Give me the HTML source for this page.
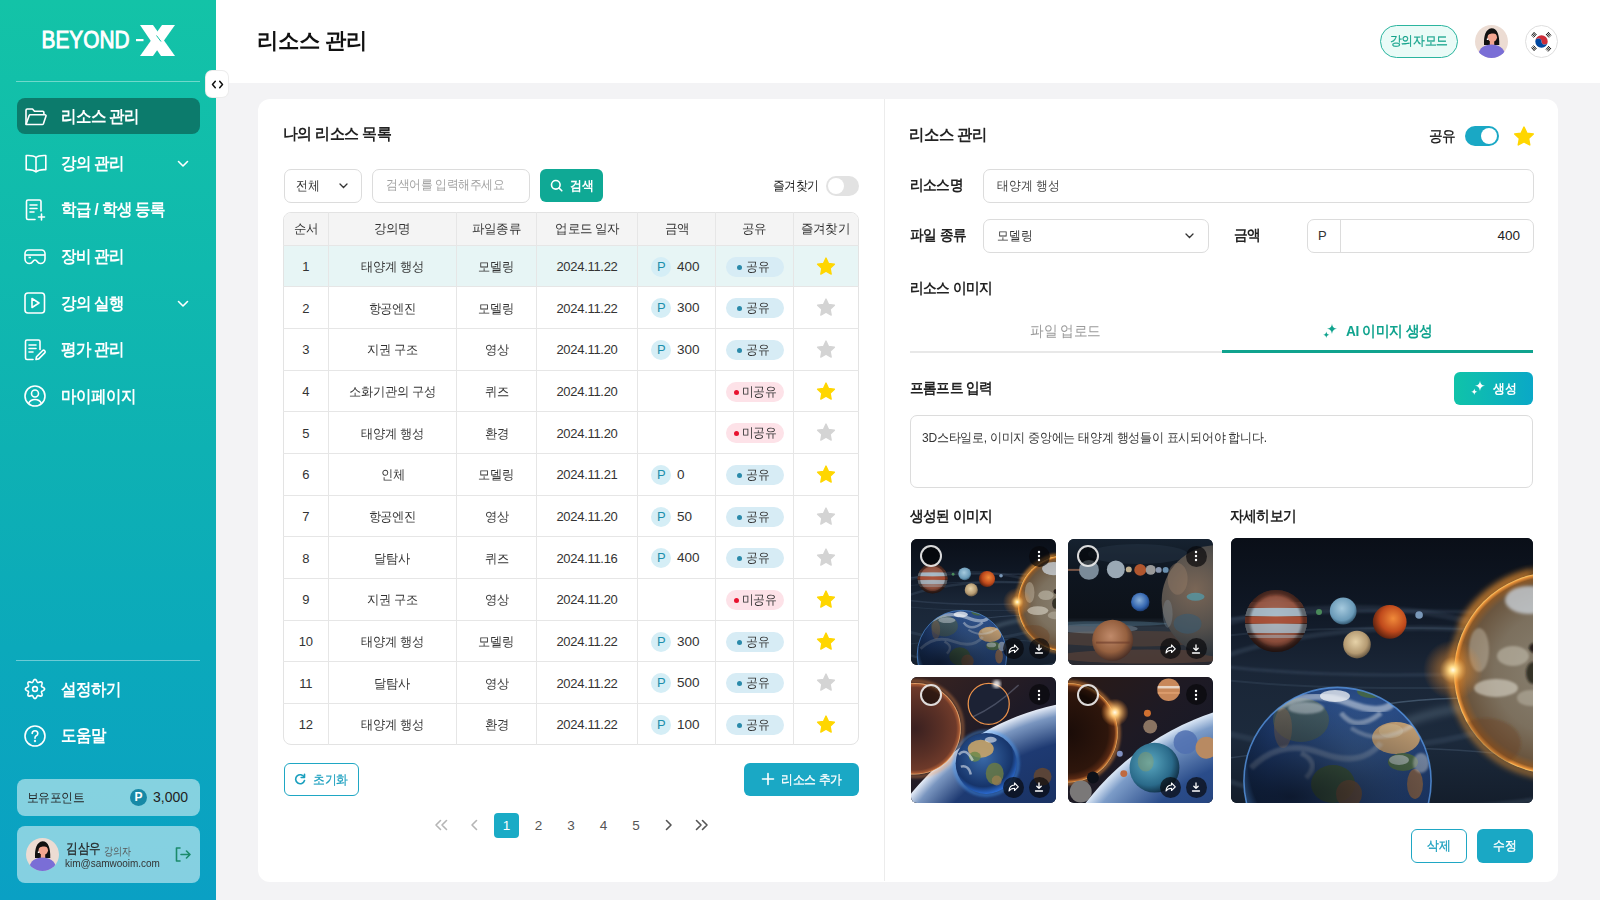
<!DOCTYPE html>
<html lang="ko">
<head>
<meta charset="utf-8">
<style>
*{box-sizing:border-box;margin:0;padding:0}
html,body{width:1600px;height:900px;overflow:hidden}
body{font-family:"Liberation Sans",sans-serif;background:#f3f3f5;position:relative;color:#222}
.abs{position:absolute}
.k{display:inline-block;transform:scaleX(var(--s,.91));transform-origin:0 50%}
.kc{transform-origin:50% 50%}
#side{position:absolute;left:0;top:0;width:216px;height:900px;background:linear-gradient(180deg,#13c3a7 0%,#10b9ae 30%,#0eb1b3 50%,#0ba9bb 72%,#0aa0c4 100%)}
.sdiv{position:absolute;left:16px;width:184px;height:1px;background:rgba(255,255,255,0.4)}
.mtx{position:absolute;left:61px;height:36px;line-height:35px;color:#fff;font-size:16.5px;font-weight:bold;letter-spacing:-0.6px;white-space:nowrap}
#hdr{position:absolute;left:216px;top:0;width:1384px;height:83px;background:#fff}
.ttl{position:absolute;left:257px;top:27px;font-size:22px;font-weight:bold;color:#111;line-height:28px;letter-spacing:-0.5px}
#card{position:absolute;left:258px;top:99px;width:1300px;height:782.5px;background:#fff;border-radius:12px}
.vdiv{position:absolute;left:884px;top:99px;width:1px;height:782px;background:#ececec}
.h3{position:absolute;font-size:16px;font-weight:bold;color:#222;line-height:20px;letter-spacing:-0.5px;white-space:nowrap}
.lbl{position:absolute;font-size:14.5px;font-weight:bold;color:#222;line-height:20px;letter-spacing:-0.5px;white-space:nowrap}
.inp{position:absolute;border:1px solid #dcdcdc;border-radius:7px;background:#fff;font-size:13px;color:#333;white-space:nowrap}
.tbl{position:absolute;border:1px solid #e3e3e3;border-radius:8px}
.hl{position:absolute;height:1px;background:#e6e6e6}
.vl{position:absolute;width:1px;background:#e6e6e6}
.cell{position:absolute;text-align:center;font-size:13px;color:#333;white-space:nowrap;letter-spacing:-0.3px}
.th{color:#333}
.pbadge{position:absolute;width:20px;height:20px;border-radius:10px;background:#d5eef6;color:#1c8fab;font-size:13px;text-align:center;line-height:20px}
.amt{position:absolute;font-size:13.5px;color:#333;line-height:20px}
.pill{position:absolute;width:58.5px;height:20px;border-radius:10px;font-size:12.5px;color:#333;line-height:20px;text-align:center;padding-left:6px;letter-spacing:-0.3px;white-space:nowrap}
.pill i{position:absolute;left:11px;top:8px;width:5px;height:5px;border-radius:3px}
.pill.sh{background:#d7ecf5}
.pill.sh i{background:#2b8aaa}
.pill.ns{background:#fde2e8;padding-left:9px}
.pill.ns i{background:#e8122f;left:8px}
.pg{position:absolute;top:813px;width:25px;height:25px;line-height:25px;text-align:center;font-size:13.5px;color:#555}
.thumb{position:absolute;border-radius:6px;overflow:hidden;background:#0e1522}
.ck{position:absolute;width:22px;height:22px;border-radius:11px;border:2px solid rgba(255,255,255,0.85);background:rgba(0,0,0,0.55)}
.dk{position:absolute;width:21px;height:21px;border-radius:11px;background:rgba(8,8,10,0.68)}
</style>
</head>
<body>
<div id="hdr"></div>
<div id="side">
<svg class="abs" style="left:40px;top:24px" width="140" height="34" viewBox="0 0 140 34">
<text x="1.5" y="24" font-family="Liberation Sans" font-size="23" fill="#fff" stroke="#fff" stroke-width=".9" textLength="88" lengthAdjust="spacingAndGlyphs">BEYOND</text>
<rect x="96" y="15" width="7.5" height="2.2" fill="#fff"/>
<polygon points="100,1 113,1 135,32 121,32" fill="#fff"/>
<polygon points="122,1 135,1 113,32 100,32" fill="#fff"/>
<path d="M116.5 11.5 L121 17.5" stroke="#13c3a7" stroke-width="1"/>
</svg>
<div class="sdiv" style="top:81px"></div>
<div class="abs" style="left:17px;top:98px;width:183px;height:36px;border-radius:8px;background:#0c7b6c"></div>
<div class="abs" style="left:25px;top:108px"><svg width="22" height="18" viewBox="0 0 22 18" fill="none" stroke="#fff" stroke-width="1.6" stroke-linejoin="round"><path d="M1 16.5V2.2C1 1.5 1.5 1 2.2 1h5.3l2 2.2h8.2c.7 0 1.2.5 1.2 1.2v2.4"/><path d="M1 16.5l3.2-9c.2-.5.6-.8 1.1-.8h14.6c.8 0 1.3.7 1.1 1.4l-2.6 7.6c-.2.5-.6.8-1.1.8H1z"/></svg></div>
<div class="mtx" style="top:99px"><span class="k">리소스 관리</span></div>
<div class="abs" style="left:25px;top:154px"><svg width="22" height="20" viewBox="0 0 22 20" fill="none" stroke="#fff" stroke-width="1.6" stroke-linejoin="round"><path d="M11 3.5C9 1.8 6 1.2 1.2 1.5v14.2c4.6-.3 7.6.3 9.8 2.3 2.2-2 5.2-2.6 9.8-2.3V1.5C16 1.2 13 1.8 11 3.5z"/><path d="M11 3.5V18"/></svg></div>
<div class="mtx" style="top:146px"><span class="k">강의 관리</span></div>
<div class="abs" style="left:177px;top:160px;line-height:0"><svg width="12" height="8" viewBox="0 0 12 8" fill="none" stroke="#fff" stroke-width="1.6" stroke-linecap="round" stroke-linejoin="round"><path d="M1.5 1.5L6 6l4.5-4.5"/></svg></div>
<div class="abs" style="left:25px;top:199px"><svg width="22" height="22" viewBox="0 0 22 22" fill="none" stroke="#fff" stroke-width="1.6" stroke-linecap="round" stroke-linejoin="round"><path d="M10 20.5H3c-.8 0-1.5-.7-1.5-1.5V2.5C1.5 1.7 2.2 1 3 1h11.5c.8 0 1.5.7 1.5 1.5V12"/><path d="M5 6h7M5 9.5h7M5 13h4"/><path d="M16.5 15v6M13.5 18h6"/></svg></div>
<div class="mtx" style="top:192px"><span class="k">학급 / 학생 등록</span></div>
<div class="abs" style="left:24px;top:249px"><svg width="22" height="16" viewBox="0 0 22 16" fill="none" stroke="#fff" stroke-width="1.6" stroke-linejoin="round"><path d="M4.5 1h13c2 0 3.5 1.6 3.5 3.5v5.5c0 2.5-2 4.5-4.5 4.5-1.6 0-2.6-.8-3.3-2-.6-1-1.4-1.5-2.2-1.5s-1.6.5-2.2 1.5c-.7 1.2-1.7 2-3.3 2C3 14.5 1 12.5 1 10V4.5C1 2.6 2.5 1 4.5 1z"/><path d="M1.2 6h19.6"/><path d="M4.5 8.5h2.5"/></svg></div>
<div class="mtx" style="top:239px"><span class="k">장비 관리</span></div>
<div class="abs" style="left:24px;top:292px"><svg width="22" height="22" viewBox="0 0 22 22" fill="none" stroke="#fff" stroke-width="1.6" stroke-linejoin="round"><rect x="1" y="1" width="19.5" height="20" rx="3"/><path d="M8 6.5v9l7-4.5z"/></svg></div>
<div class="mtx" style="top:286px"><span class="k">강의 실행</span></div>
<div class="abs" style="left:177px;top:300px;line-height:0"><svg width="12" height="8" viewBox="0 0 12 8" fill="none" stroke="#fff" stroke-width="1.6" stroke-linecap="round" stroke-linejoin="round"><path d="M1.5 1.5L6 6l4.5-4.5"/></svg></div>
<div class="abs" style="left:24px;top:339px"><svg width="22" height="22" viewBox="0 0 22 22" fill="none" stroke="#fff" stroke-width="1.6" stroke-linecap="round" stroke-linejoin="round"><path d="M9 20.5H3c-.8 0-1.5-.7-1.5-1.5V2.5C1.5 1.7 2.2 1 3 1h11.5c.8 0 1.5.7 1.5 1.5v8"/><path d="M5 6h7M5 9.5h7M5 13h4"/><path d="M12 20.5l.5-2.8 6-6c.6-.6 1.6-.6 2.2 0s.6 1.6 0 2.2l-6 6z"/></svg></div>
<div class="mtx" style="top:332px"><span class="k">평가 관리</span></div>
<div class="abs" style="left:24px;top:385px"><svg width="22" height="22" viewBox="0 0 22 22" fill="none" stroke="#fff" stroke-width="1.6"><circle cx="11" cy="11" r="10"/><circle cx="11" cy="8.5" r="3.5"/><path d="M4.5 18.5c1.2-2.6 3.6-4 6.5-4s5.3 1.4 6.5 4"/></svg></div>
<div class="mtx" style="top:379px"><span class="k">마이페이지</span></div>
<div class="abs" style="left:24px;top:678px"><svg width="22" height="22" viewBox="0 0 22 22" fill="none" stroke="#fff" stroke-width="1.6" stroke-linejoin="round"><path d="M11.00 1.40 L11.62 1.59 L12.17 2.13 L12.62 2.86 L12.98 3.61 L13.31 4.21 L13.68 4.53 L14.17 4.57 L14.82 4.37 L15.61 4.10 L16.45 3.90 L17.21 3.91 L17.79 4.21 L18.09 4.79 L18.10 5.55 L17.90 6.39 L17.63 7.17 L17.43 7.83 L17.47 8.32 L17.79 8.69 L18.39 9.02 L19.14 9.38 L19.87 9.83 L20.41 10.38 L20.60 11.00 L20.41 11.62 L19.87 12.17 L19.14 12.62 L18.39 12.98 L17.79 13.31 L17.47 13.68 L17.43 14.17 L17.63 14.82 L17.90 15.61 L18.10 16.45 L18.09 17.21 L17.79 17.79 L17.21 18.09 L16.45 18.10 L15.61 17.90 L14.82 17.63 L14.17 17.43 L13.68 17.47 L13.31 17.79 L12.98 18.39 L12.62 19.14 L12.17 19.87 L11.62 20.41 L11.00 20.60 L10.38 20.41 L9.83 19.87 L9.38 19.14 L9.02 18.39 L8.69 17.79 L8.32 17.47 L7.83 17.43 L7.18 17.63 L6.39 17.90 L5.55 18.10 L4.79 18.09 L4.21 17.79 L3.91 17.21 L3.90 16.45 L4.10 15.61 L4.37 14.83 L4.57 14.17 L4.53 13.68 L4.21 13.31 L3.61 12.98 L2.86 12.62 L2.13 12.17 L1.59 11.62 L1.40 11.00 L1.59 10.38 L2.13 9.83 L2.86 9.38 L3.61 9.02 L4.21 8.69 L4.53 8.32 L4.57 7.83 L4.37 7.17 L4.10 6.39 L3.90 5.55 L3.91 4.79 L4.21 4.21 L4.79 3.91 L5.55 3.90 L6.39 4.10 L7.17 4.37 L7.83 4.57 L8.32 4.53 L8.69 4.21 L9.02 3.61 L9.38 2.86 L9.83 2.13 L10.38 1.59 L11.00 1.40Z"/><circle cx="11" cy="11" r="2.4"/></svg></div>
<div class="mtx" style="top:672px"><span class="k">설정하기</span></div>
<div class="abs" style="left:24px;top:725px"><svg width="22" height="22" viewBox="0 0 22 22" fill="none" stroke="#fff" stroke-width="1.6" stroke-linecap="round"><circle cx="11" cy="11" r="10"/><path d="M8.2 8.5c0-1.7 1.3-2.8 2.8-2.8s2.8 1.1 2.8 2.7c0 1.2-.7 1.8-1.6 2.4-.8.5-1.2 1-1.2 2v.5"/><circle cx="11" cy="16" r=".4" fill="#fff"/></svg></div>
<div class="mtx" style="top:718px"><span class="k">도움말</span></div>
<div class="sdiv" style="top:660px"></div>
<div class="abs" style="left:17px;top:779px;width:183px;height:37px;border-radius:8px;background:rgba(255,255,255,0.5)"></div>
<div class="abs" style="left:27px;top:779px;line-height:37px;font-size:13px;color:#222;letter-spacing:-0.4px"><span class="k">보유포인트</span></div>
<div class="abs" style="left:130px;top:789px;width:17px;height:17px;border-radius:9px;background:#1789a6;color:#fff;font-size:12px;font-weight:bold;text-align:center;line-height:17px">P</div>
<div class="abs" style="left:153px;top:779px;line-height:37px;font-size:14px;color:#222">3,000</div>
<div class="abs" style="left:17px;top:826px;width:183px;height:56.5px;border-radius:8px;background:rgba(255,255,255,0.5)"></div>
<div class="abs" style="left:26px;top:838px"><svg width="33" height="33" viewBox="0 0 33 33"><defs><clipPath id="av1"><circle cx="16.5" cy="16.5" r="16.5"/></clipPath></defs><g clip-path="url(#av1)"><rect width="33" height="33" fill="#ecdcd3"/><path d="M9 20C8.6 11 10.5 4 16.5 3.2 22.5 3.4 24.4 10 24.3 20z" fill="#111"/><ellipse cx="17.3" cy="12.2" rx="4.7" ry="4.6" fill="#f2a590"/><path d="M11.5 10C12 5.5 14.5 4 17.5 4.2 20.5 4.5 22.3 7 22.2 9.2 19.5 8.2 15.5 8 11.5 10.5z" fill="#111"/><rect x="14.8" y="15.5" width="4.4" height="4.5" fill="#f2a590"/><circle cx="12.6" cy="14.2" r=".9" fill="#fff"/><path d="M3.3 29C4.8 22.5 9 19.6 16.5 19.4 24 19.6 28.3 22.5 30 28.5V34H3z" fill="#7a6ed6"/></g></svg></div>
<div class="abs" style="left:65.5px;top:839px;line-height:18px;font-size:14px;color:#222;-webkit-text-stroke:.25px #222"><span class="k" style="--s:0.83">김삼우</span></div><div class="abs" style="left:104px;top:842px;line-height:18px;font-size:10.5px;color:#555"><span class="k" style="--s:0.82">강의자</span></div>
<div class="abs" style="left:65px;top:856px;line-height:14px;font-size:10.5px;color:#333"><span class="k" style="--s:.95">kim@samwooim.com</span></div>
<svg class="abs" style="left:175px;top:847px" width="16" height="15" viewBox="0 0 16 15" fill="none" stroke="#1b8a6b" stroke-width="1.6" stroke-linecap="round" stroke-linejoin="round"><path d="M5 1H1.5v13H5"/><path d="M6 7.5h9M11.5 4l3.5 3.5-3.5 3.5"/></svg>
</div>
<div class="abs" style="left:205.5px;top:70.5px;width:22.7px;height:26.7px;background:#fff;border-radius:6px;box-shadow:0 0 0 1px #ececec"></div>
<svg class="abs" style="left:211px;top:79.5px" width="13" height="9" viewBox="0 0 13 9" fill="none" stroke="#111" stroke-width="1.5" stroke-linecap="round" stroke-linejoin="round"><path d="M4.3 1.2L1.5 4.5l2.8 3.3M8.7 1.2l2.8 3.3-2.8 3.3"/></svg>
<div class="ttl"><span class="k" style="--s:0.97">리소스 관리</span></div>
<div class="abs" style="left:1380px;top:25px;width:78px;height:33px;border-radius:17px;border:1px solid #2bb59f;background:#eafbf7;color:#16a38c;font-size:12.5px;-webkit-text-stroke:.25px #16a38c;text-align:center;line-height:31px;letter-spacing:-0.3px"><span class="k kc">강의자모드</span></div>
<div class="abs" style="left:1475px;top:25px"><svg width="33" height="33" viewBox="0 0 33 33"><defs><clipPath id="av2"><circle cx="16.5" cy="16.5" r="16.5"/></clipPath></defs><g clip-path="url(#av2)"><rect width="33" height="33" fill="#ecdcd3"/><path d="M9 20C8.6 11 10.5 4 16.5 3.2 22.5 3.4 24.4 10 24.3 20z" fill="#111"/><ellipse cx="17.3" cy="12.2" rx="4.7" ry="4.6" fill="#f2a590"/><path d="M11.5 10C12 5.5 14.5 4 17.5 4.2 20.5 4.5 22.3 7 22.2 9.2 19.5 8.2 15.5 8 11.5 10.5z" fill="#111"/><rect x="14.8" y="15.5" width="4.4" height="4.5" fill="#f2a590"/><circle cx="12.6" cy="14.2" r=".9" fill="#fff"/><path d="M3.3 29C4.8 22.5 9 19.6 16.5 19.4 24 19.6 28.3 22.5 30 28.5V34H3z" fill="#7a6ed6"/></g></svg></div>
<div class="abs" style="left:1525px;top:25px"><svg width="33" height="33" viewBox="0 0 33 33"><circle cx="16.5" cy="16.5" r="16" fill="#fff" stroke="#dedede"/><path d="M10.3 16.5a6.2 6.2 0 0 1 12.4 0a3.1 3.1 0 0 1-6.2 0a3.1 3.1 0 0 0-6.2 0z" fill="#cd2e3a"/><path d="M10.3 16.5a6.2 6.2 0 0 0 12.4 0a3.1 3.1 0 0 1-6.2 0a3.1 3.1 0 0 0-6.2 0z" fill="#0047a0"/><g stroke="#111" stroke-width="1"><path d="M6.5 10.5l3-3.5M7.5 11.5l3-3.5M8.5 12.5l3-3.5"/><path d="M22 8l3 3.5M23 7l3 3.5M21 9l3 3.5"/><path d="M6.5 22.5l3 3.5M7.5 21.5l3 3.5M8.5 20.5l3 3.5"/><path d="M22 25.5l3-3.5M23 26.5l3-3.5M21 24.5l3-3.5"/></g></svg></div>
<div id="card"></div>
<div class="vdiv"></div>

<!-- left panel -->
<div class="h3" style="left:283px;top:124px"><span class="k" style="--s:0.93">나의 리소스 목록</span></div>
<div class="inp" style="left:283.5px;top:169px;width:78px;height:33.5px;line-height:31px;padding-left:11px"><span class="k">전체</span></div>
<svg class="abs" style="left:339px;top:183px" width="9" height="6" viewBox="0 0 9 6" fill="none" stroke="#333" stroke-width="1.3" stroke-linecap="round"><path d="M1 1l3.5 3.5L8 1"/></svg>
<div class="inp" style="left:371.5px;top:169px;width:158px;height:33.5px;line-height:31px;padding-left:13px;color:#a3a3a3;font-size:12.5px;letter-spacing:-0.3px"><span class="k">검색어를 입력해주세요</span></div>
<div class="abs" style="left:540px;top:169px;width:63px;height:33px;border-radius:6px;background:#0fa995"></div>
<svg class="abs" style="left:550px;top:179px" width="13" height="13" viewBox="0 0 13 13" fill="none" stroke="#fff" stroke-width="1.6" stroke-linecap="round"><circle cx="5.8" cy="5.8" r="4.3"/><path d="M9 9l2.8 2.8"/></svg>
<div class="abs" style="left:570px;top:169px;line-height:33px;font-size:13px;color:#fff;font-weight:bold;letter-spacing:-0.3px"><span class="k">검색</span></div>
<div class="abs" style="left:773px;top:176px;line-height:20px;font-size:13px;color:#222;letter-spacing:-0.4px"><span class="k">즐겨찾기</span></div>
<div class="abs" style="left:826px;top:176px;width:33px;height:20px;border-radius:10px;background:#e2e2e2"></div>
<div class="abs" style="left:828px;top:178px;width:16px;height:16px;border-radius:8px;background:#fff"></div>
<div class="tbl" style="left:283px;top:212px;width:575.6px;height:533px"></div>
<div class="abs" style="left:284px;top:213px;width:573.6px;height:32.30000000000001px;background:#f4f4f4;border-radius:7px 7px 0 0"></div>
<div class="abs" style="left:284px;top:245.3px;width:573.6px;height:41.641666666666666px;background:#e7f5f5"></div>
<div class="hl" style="left:283px;top:244.80px;width:575.6px"></div>
<div class="hl" style="left:283px;top:286.44px;width:575.6px"></div>
<div class="hl" style="left:283px;top:328.08px;width:575.6px"></div>
<div class="hl" style="left:283px;top:369.73px;width:575.6px"></div>
<div class="hl" style="left:283px;top:411.37px;width:575.6px"></div>
<div class="hl" style="left:283px;top:453.01px;width:575.6px"></div>
<div class="hl" style="left:283px;top:494.65px;width:575.6px"></div>
<div class="hl" style="left:283px;top:536.29px;width:575.6px"></div>
<div class="hl" style="left:283px;top:577.93px;width:575.6px"></div>
<div class="hl" style="left:283px;top:619.58px;width:575.6px"></div>
<div class="hl" style="left:283px;top:661.22px;width:575.6px"></div>
<div class="hl" style="left:283px;top:702.86px;width:575.6px"></div>
<div class="vl" style="left:327.9px;top:212px;height:533px"></div>
<div class="vl" style="left:455.9px;top:212px;height:533px"></div>
<div class="vl" style="left:536.0px;top:212px;height:533px"></div>
<div class="vl" style="left:637.0px;top:212px;height:533px"></div>
<div class="vl" style="left:714.8px;top:212px;height:533px"></div>
<div class="vl" style="left:792.5px;top:212px;height:533px"></div>
<div class="cell th" style="left:283px;top:212px;width:45.39999999999998px;height:33.30000000000001px;line-height:33.30000000000001px"><span class="k kc" style="--s:0.96">순서</span></div>
<div class="cell th" style="left:328.4px;top:212px;width:128.0px;height:33.30000000000001px;line-height:33.30000000000001px"><span class="k kc" style="--s:0.96">강의명</span></div>
<div class="cell th" style="left:456.4px;top:212px;width:80.10000000000002px;height:33.30000000000001px;line-height:33.30000000000001px"><span class="k kc" style="--s:0.96">파일종류</span></div>
<div class="cell th" style="left:536.5px;top:212px;width:101.0px;height:33.30000000000001px;line-height:33.30000000000001px"><span class="k kc" style="--s:0.96">업로드 일자</span></div>
<div class="cell th" style="left:637.5px;top:212px;width:77.79999999999995px;height:33.30000000000001px;line-height:33.30000000000001px"><span class="k kc" style="--s:0.96">금액</span></div>
<div class="cell th" style="left:715.3px;top:212px;width:77.70000000000005px;height:33.30000000000001px;line-height:33.30000000000001px"><span class="k kc" style="--s:0.96">공유</span></div>
<div class="cell th" style="left:793px;top:212px;width:65.60000000000002px;height:33.30000000000001px;line-height:33.30000000000001px"><span class="k kc" style="--s:0.96">즐겨찾기</span></div>
<div class="cell" style="left:283px;top:246.10px;width:45.39999999999998px;height:41.64px;line-height:41.64px">1</div>
<div class="cell" style="left:328.4px;top:246.10px;width:128.0px;height:41.64px;line-height:41.64px"><span class="k kc" style="--s:0.94">태양계 행성</span></div>
<div class="cell" style="left:456.4px;top:246.10px;width:80.10000000000002px;height:41.64px;line-height:41.64px"><span class="k kc" style="--s:0.94">모델링</span></div>
<div class="cell" style="left:536.5px;top:246.10px;width:101.0px;height:41.64px;line-height:41.64px">2024.11.22</div>
<div class="pbadge" style="left:651.3px;top:256.82px">P</div>
<div class="amt" style="left:677px;top:256.82px">400</div>
<div class="pill sh" style="left:725.5px;top:256.82px"><i></i><span class="k kc">공유</span></div>
<div class="abs" style="left:816px;top:256.82px;width:20px;height:19px"><svg width="20" height="19" viewBox="0 0 24 23"><path d="M12 1.2l3.1 6.6 7.1.9-5.2 4.9 1.3 7.1L12 17.3l-6.3 3.4 1.3-7.1L1.8 8.7l7.1-.9z" fill="#ffd600" stroke="#ffd600" stroke-width="1.6" stroke-linejoin="round"/></svg></div>
<div class="cell" style="left:283px;top:287.74px;width:45.39999999999998px;height:41.64px;line-height:41.64px">2</div>
<div class="cell" style="left:328.4px;top:287.74px;width:128.0px;height:41.64px;line-height:41.64px"><span class="k kc" style="--s:0.94">항공엔진</span></div>
<div class="cell" style="left:456.4px;top:287.74px;width:80.10000000000002px;height:41.64px;line-height:41.64px"><span class="k kc" style="--s:0.94">모델링</span></div>
<div class="cell" style="left:536.5px;top:287.74px;width:101.0px;height:41.64px;line-height:41.64px">2024.11.22</div>
<div class="pbadge" style="left:651.3px;top:298.46px">P</div>
<div class="amt" style="left:677px;top:298.46px">300</div>
<div class="pill sh" style="left:725.5px;top:298.46px"><i></i><span class="k kc">공유</span></div>
<div class="abs" style="left:816px;top:298.46px;width:20px;height:19px"><svg width="20" height="19" viewBox="0 0 24 23"><path d="M12 1.2l3.1 6.6 7.1.9-5.2 4.9 1.3 7.1L12 17.3l-6.3 3.4 1.3-7.1L1.8 8.7l7.1-.9z" fill="#d4d4d4" stroke="#d4d4d4" stroke-width="1.6" stroke-linejoin="round"/></svg></div>
<div class="cell" style="left:283px;top:329.38px;width:45.39999999999998px;height:41.64px;line-height:41.64px">3</div>
<div class="cell" style="left:328.4px;top:329.38px;width:128.0px;height:41.64px;line-height:41.64px"><span class="k kc" style="--s:0.94">지권 구조</span></div>
<div class="cell" style="left:456.4px;top:329.38px;width:80.10000000000002px;height:41.64px;line-height:41.64px"><span class="k kc" style="--s:0.94">영상</span></div>
<div class="cell" style="left:536.5px;top:329.38px;width:101.0px;height:41.64px;line-height:41.64px">2024.11.20</div>
<div class="pbadge" style="left:651.3px;top:340.10px">P</div>
<div class="amt" style="left:677px;top:340.10px">300</div>
<div class="pill sh" style="left:725.5px;top:340.10px"><i></i><span class="k kc">공유</span></div>
<div class="abs" style="left:816px;top:340.10px;width:20px;height:19px"><svg width="20" height="19" viewBox="0 0 24 23"><path d="M12 1.2l3.1 6.6 7.1.9-5.2 4.9 1.3 7.1L12 17.3l-6.3 3.4 1.3-7.1L1.8 8.7l7.1-.9z" fill="#d4d4d4" stroke="#d4d4d4" stroke-width="1.6" stroke-linejoin="round"/></svg></div>
<div class="cell" style="left:283px;top:371.03px;width:45.39999999999998px;height:41.64px;line-height:41.64px">4</div>
<div class="cell" style="left:328.4px;top:371.03px;width:128.0px;height:41.64px;line-height:41.64px"><span class="k kc" style="--s:0.94">소화기관의 구성</span></div>
<div class="cell" style="left:456.4px;top:371.03px;width:80.10000000000002px;height:41.64px;line-height:41.64px"><span class="k kc" style="--s:0.94">퀴즈</span></div>
<div class="cell" style="left:536.5px;top:371.03px;width:101.0px;height:41.64px;line-height:41.64px">2024.11.20</div>
<div class="pill ns" style="left:725.5px;top:381.75px"><i></i><span class="k kc">미공유</span></div>
<div class="abs" style="left:816px;top:381.75px;width:20px;height:19px"><svg width="20" height="19" viewBox="0 0 24 23"><path d="M12 1.2l3.1 6.6 7.1.9-5.2 4.9 1.3 7.1L12 17.3l-6.3 3.4 1.3-7.1L1.8 8.7l7.1-.9z" fill="#ffd600" stroke="#ffd600" stroke-width="1.6" stroke-linejoin="round"/></svg></div>
<div class="cell" style="left:283px;top:412.67px;width:45.39999999999998px;height:41.64px;line-height:41.64px">5</div>
<div class="cell" style="left:328.4px;top:412.67px;width:128.0px;height:41.64px;line-height:41.64px"><span class="k kc" style="--s:0.94">태양계 행성</span></div>
<div class="cell" style="left:456.4px;top:412.67px;width:80.10000000000002px;height:41.64px;line-height:41.64px"><span class="k kc" style="--s:0.94">환경</span></div>
<div class="cell" style="left:536.5px;top:412.67px;width:101.0px;height:41.64px;line-height:41.64px">2024.11.20</div>
<div class="pill ns" style="left:725.5px;top:423.39px"><i></i><span class="k kc">미공유</span></div>
<div class="abs" style="left:816px;top:423.39px;width:20px;height:19px"><svg width="20" height="19" viewBox="0 0 24 23"><path d="M12 1.2l3.1 6.6 7.1.9-5.2 4.9 1.3 7.1L12 17.3l-6.3 3.4 1.3-7.1L1.8 8.7l7.1-.9z" fill="#d4d4d4" stroke="#d4d4d4" stroke-width="1.6" stroke-linejoin="round"/></svg></div>
<div class="cell" style="left:283px;top:454.31px;width:45.39999999999998px;height:41.64px;line-height:41.64px">6</div>
<div class="cell" style="left:328.4px;top:454.31px;width:128.0px;height:41.64px;line-height:41.64px"><span class="k kc" style="--s:0.94">인체</span></div>
<div class="cell" style="left:456.4px;top:454.31px;width:80.10000000000002px;height:41.64px;line-height:41.64px"><span class="k kc" style="--s:0.94">모델링</span></div>
<div class="cell" style="left:536.5px;top:454.31px;width:101.0px;height:41.64px;line-height:41.64px">2024.11.21</div>
<div class="pbadge" style="left:651.3px;top:465.03px">P</div>
<div class="amt" style="left:677px;top:465.03px">0</div>
<div class="pill sh" style="left:725.5px;top:465.03px"><i></i><span class="k kc">공유</span></div>
<div class="abs" style="left:816px;top:465.03px;width:20px;height:19px"><svg width="20" height="19" viewBox="0 0 24 23"><path d="M12 1.2l3.1 6.6 7.1.9-5.2 4.9 1.3 7.1L12 17.3l-6.3 3.4 1.3-7.1L1.8 8.7l7.1-.9z" fill="#ffd600" stroke="#ffd600" stroke-width="1.6" stroke-linejoin="round"/></svg></div>
<div class="cell" style="left:283px;top:495.95px;width:45.39999999999998px;height:41.64px;line-height:41.64px">7</div>
<div class="cell" style="left:328.4px;top:495.95px;width:128.0px;height:41.64px;line-height:41.64px"><span class="k kc" style="--s:0.94">항공엔진</span></div>
<div class="cell" style="left:456.4px;top:495.95px;width:80.10000000000002px;height:41.64px;line-height:41.64px"><span class="k kc" style="--s:0.94">영상</span></div>
<div class="cell" style="left:536.5px;top:495.95px;width:101.0px;height:41.64px;line-height:41.64px">2024.11.20</div>
<div class="pbadge" style="left:651.3px;top:506.67px">P</div>
<div class="amt" style="left:677px;top:506.67px">50</div>
<div class="pill sh" style="left:725.5px;top:506.67px"><i></i><span class="k kc">공유</span></div>
<div class="abs" style="left:816px;top:506.67px;width:20px;height:19px"><svg width="20" height="19" viewBox="0 0 24 23"><path d="M12 1.2l3.1 6.6 7.1.9-5.2 4.9 1.3 7.1L12 17.3l-6.3 3.4 1.3-7.1L1.8 8.7l7.1-.9z" fill="#d4d4d4" stroke="#d4d4d4" stroke-width="1.6" stroke-linejoin="round"/></svg></div>
<div class="cell" style="left:283px;top:537.59px;width:45.39999999999998px;height:41.64px;line-height:41.64px">8</div>
<div class="cell" style="left:328.4px;top:537.59px;width:128.0px;height:41.64px;line-height:41.64px"><span class="k kc" style="--s:0.94">달탐사</span></div>
<div class="cell" style="left:456.4px;top:537.59px;width:80.10000000000002px;height:41.64px;line-height:41.64px"><span class="k kc" style="--s:0.94">퀴즈</span></div>
<div class="cell" style="left:536.5px;top:537.59px;width:101.0px;height:41.64px;line-height:41.64px">2024.11.16</div>
<div class="pbadge" style="left:651.3px;top:548.31px">P</div>
<div class="amt" style="left:677px;top:548.31px">400</div>
<div class="pill sh" style="left:725.5px;top:548.31px"><i></i><span class="k kc">공유</span></div>
<div class="abs" style="left:816px;top:548.31px;width:20px;height:19px"><svg width="20" height="19" viewBox="0 0 24 23"><path d="M12 1.2l3.1 6.6 7.1.9-5.2 4.9 1.3 7.1L12 17.3l-6.3 3.4 1.3-7.1L1.8 8.7l7.1-.9z" fill="#d4d4d4" stroke="#d4d4d4" stroke-width="1.6" stroke-linejoin="round"/></svg></div>
<div class="cell" style="left:283px;top:579.23px;width:45.39999999999998px;height:41.64px;line-height:41.64px">9</div>
<div class="cell" style="left:328.4px;top:579.23px;width:128.0px;height:41.64px;line-height:41.64px"><span class="k kc" style="--s:0.94">지권 구조</span></div>
<div class="cell" style="left:456.4px;top:579.23px;width:80.10000000000002px;height:41.64px;line-height:41.64px"><span class="k kc" style="--s:0.94">영상</span></div>
<div class="cell" style="left:536.5px;top:579.23px;width:101.0px;height:41.64px;line-height:41.64px">2024.11.20</div>
<div class="pill ns" style="left:725.5px;top:589.95px"><i></i><span class="k kc">미공유</span></div>
<div class="abs" style="left:816px;top:589.95px;width:20px;height:19px"><svg width="20" height="19" viewBox="0 0 24 23"><path d="M12 1.2l3.1 6.6 7.1.9-5.2 4.9 1.3 7.1L12 17.3l-6.3 3.4 1.3-7.1L1.8 8.7l7.1-.9z" fill="#ffd600" stroke="#ffd600" stroke-width="1.6" stroke-linejoin="round"/></svg></div>
<div class="cell" style="left:283px;top:620.88px;width:45.39999999999998px;height:41.64px;line-height:41.64px">10</div>
<div class="cell" style="left:328.4px;top:620.88px;width:128.0px;height:41.64px;line-height:41.64px"><span class="k kc" style="--s:0.94">태양계 행성</span></div>
<div class="cell" style="left:456.4px;top:620.88px;width:80.10000000000002px;height:41.64px;line-height:41.64px"><span class="k kc" style="--s:0.94">모델링</span></div>
<div class="cell" style="left:536.5px;top:620.88px;width:101.0px;height:41.64px;line-height:41.64px">2024.11.22</div>
<div class="pbadge" style="left:651.3px;top:631.60px">P</div>
<div class="amt" style="left:677px;top:631.60px">300</div>
<div class="pill sh" style="left:725.5px;top:631.60px"><i></i><span class="k kc">공유</span></div>
<div class="abs" style="left:816px;top:631.60px;width:20px;height:19px"><svg width="20" height="19" viewBox="0 0 24 23"><path d="M12 1.2l3.1 6.6 7.1.9-5.2 4.9 1.3 7.1L12 17.3l-6.3 3.4 1.3-7.1L1.8 8.7l7.1-.9z" fill="#ffd600" stroke="#ffd600" stroke-width="1.6" stroke-linejoin="round"/></svg></div>
<div class="cell" style="left:283px;top:662.52px;width:45.39999999999998px;height:41.64px;line-height:41.64px">11</div>
<div class="cell" style="left:328.4px;top:662.52px;width:128.0px;height:41.64px;line-height:41.64px"><span class="k kc" style="--s:0.94">달탐사</span></div>
<div class="cell" style="left:456.4px;top:662.52px;width:80.10000000000002px;height:41.64px;line-height:41.64px"><span class="k kc" style="--s:0.94">영상</span></div>
<div class="cell" style="left:536.5px;top:662.52px;width:101.0px;height:41.64px;line-height:41.64px">2024.11.22</div>
<div class="pbadge" style="left:651.3px;top:673.24px">P</div>
<div class="amt" style="left:677px;top:673.24px">500</div>
<div class="pill sh" style="left:725.5px;top:673.24px"><i></i><span class="k kc">공유</span></div>
<div class="abs" style="left:816px;top:673.24px;width:20px;height:19px"><svg width="20" height="19" viewBox="0 0 24 23"><path d="M12 1.2l3.1 6.6 7.1.9-5.2 4.9 1.3 7.1L12 17.3l-6.3 3.4 1.3-7.1L1.8 8.7l7.1-.9z" fill="#d4d4d4" stroke="#d4d4d4" stroke-width="1.6" stroke-linejoin="round"/></svg></div>
<div class="cell" style="left:283px;top:704.16px;width:45.39999999999998px;height:41.64px;line-height:41.64px">12</div>
<div class="cell" style="left:328.4px;top:704.16px;width:128.0px;height:41.64px;line-height:41.64px"><span class="k kc" style="--s:0.94">태양계 행성</span></div>
<div class="cell" style="left:456.4px;top:704.16px;width:80.10000000000002px;height:41.64px;line-height:41.64px"><span class="k kc" style="--s:0.94">환경</span></div>
<div class="cell" style="left:536.5px;top:704.16px;width:101.0px;height:41.64px;line-height:41.64px">2024.11.22</div>
<div class="pbadge" style="left:651.3px;top:714.88px">P</div>
<div class="amt" style="left:677px;top:714.88px">100</div>
<div class="pill sh" style="left:725.5px;top:714.88px"><i></i><span class="k kc">공유</span></div>
<div class="abs" style="left:816px;top:714.88px;width:20px;height:19px"><svg width="20" height="19" viewBox="0 0 24 23"><path d="M12 1.2l3.1 6.6 7.1.9-5.2 4.9 1.3 7.1L12 17.3l-6.3 3.4 1.3-7.1L1.8 8.7l7.1-.9z" fill="#ffd600" stroke="#ffd600" stroke-width="1.6" stroke-linejoin="round"/></svg></div>
<div class="abs" style="left:283.5px;top:763px;width:75px;height:33px;border-radius:6px;border:1px solid #1fa7c4;background:#fff"></div>
<svg class="abs" style="left:294px;top:773px" width="12" height="12" viewBox="0 0 12 12" fill="none" stroke="#1a9fbe" stroke-width="1.6" stroke-linecap="round"><path d="M10.2 4.2A4.5 4.5 0 1 0 10.5 7.5"/><path d="M10.5 1.2v3.3H7.2" stroke-linejoin="round"/></svg>
<div class="abs" style="left:313px;top:763px;line-height:33px;font-size:13px;color:#1a9fbe;letter-spacing:-0.3px;-webkit-text-stroke:.2px #1a9fbe"><span class="k">초기화</span></div>
<div class="abs" style="left:744px;top:763px;width:115px;height:33px;border-radius:6px;background:#1aa8c5"></div>
<svg class="abs" style="left:761px;top:772px" width="14" height="14" viewBox="0 0 14 14" fill="none" stroke="#fff" stroke-width="1.6" stroke-linecap="round"><path d="M7 1.5v11M1.5 7h11"/></svg>
<div class="abs" style="left:781px;top:763px;line-height:33px;font-size:13px;color:#fff;letter-spacing:-0.3px;-webkit-text-stroke:.3px #fff"><span class="k">리소스 추가</span></div>
<svg class="abs" style="left:434px;top:819px" width="15" height="12" viewBox="0 0 15 12" fill="none" stroke="#b5b5b5" stroke-width="1.6" stroke-linecap="round" stroke-linejoin="round"><path d="M6.5 1.5L2 6l4.5 4.5M12.5 1.5L8 6l4.5 4.5"/></svg>
<svg class="abs" style="left:470px;top:819px" width="9" height="12" viewBox="0 0 9 12" fill="none" stroke="#b5b5b5" stroke-width="1.6" stroke-linecap="round" stroke-linejoin="round"><path d="M6.5 1.5L2 6l4.5 4.5"/></svg>
<div class="pg" style="left:494px;background:#1aabc6;color:#fff;border-radius:4px">1</div>
<div class="pg" style="left:526px">2</div>
<div class="pg" style="left:558.5px">3</div>
<div class="pg" style="left:591px">4</div>
<div class="pg" style="left:623.5px">5</div>
<svg class="abs" style="left:664px;top:819px" width="9" height="12" viewBox="0 0 9 12" fill="none" stroke="#555" stroke-width="1.6" stroke-linecap="round" stroke-linejoin="round"><path d="M2.5 1.5L7 6l-4.5 4.5"/></svg>
<svg class="abs" style="left:694px;top:819px" width="15" height="12" viewBox="0 0 15 12" fill="none" stroke="#555" stroke-width="1.6" stroke-linecap="round" stroke-linejoin="round"><path d="M2.5 1.5L7 6l-4.5 4.5M8.5 1.5L13 6l-4.5 4.5"/></svg>

<!-- right panel -->
<div class="h3" style="left:909px;top:125px"><span class="k" style="--s:0.955">리소스 관리</span></div>
<div class="abs" style="left:1429px;top:126px;line-height:20px;font-size:14.5px;color:#111;letter-spacing:-0.4px;-webkit-text-stroke:.3px #111"><span class="k">공유</span></div>
<div class="abs" style="left:1465px;top:126px;width:34px;height:20px;border-radius:10px;background:#1aa8c5"></div>
<div class="abs" style="left:1481px;top:128px;width:16px;height:16px;border-radius:8px;background:#fff"></div>
<div class="abs" style="left:1513px;top:126px"><svg width="22" height="21" viewBox="0 0 24 23"><path d="M12 1.2l3.1 6.6 7.1.9-5.2 4.9 1.3 7.1L12 17.3l-6.3 3.4 1.3-7.1L1.8 8.7l7.1-.9z" fill="#ffd600" stroke="#ffd600" stroke-width="1.6" stroke-linejoin="round"/></svg></div>
<div class="lbl" style="left:910px;top:175px"><span class="k">리소스명</span></div>
<div class="inp" style="left:982.5px;top:169px;width:551px;height:33.5px;line-height:31px;padding-left:13px;color:#444"><span class="k">태양계 행성</span></div>
<div class="lbl" style="left:910px;top:225px"><span class="k">파일 종류</span></div>
<div class="inp" style="left:982.5px;top:219px;width:226px;height:33.5px;line-height:31px;padding-left:13px"><span class="k">모델링</span></div>
<svg class="abs" style="left:1185px;top:233px" width="9" height="6" viewBox="0 0 9 6" fill="none" stroke="#333" stroke-width="1.3" stroke-linecap="round"><path d="M1 1l3.5 3.5L8 1"/></svg>
<div class="lbl" style="left:1234px;top:225px"><span class="k">금액</span></div>
<div class="inp" style="left:1306.5px;top:219px;width:227px;height:33.5px"></div>
<div class="abs" style="left:1340px;top:220px;width:1px;height:31.5px;background:#dcdcdc"></div>
<div class="abs" style="left:1318px;top:219px;line-height:33px;font-size:13px;color:#333">P</div>
<div class="abs" style="left:1480px;top:219px;width:40px;text-align:right;line-height:33px;font-size:13.5px;color:#222">400</div>
<div class="lbl" style="left:910px;top:278px"><span class="k">리소스 이미지</span></div>
<div class="abs" style="left:910px;top:350.5px;width:623px;height:2px;background:#e8e8e8"></div>
<div class="abs" style="left:1221.5px;top:349.5px;width:311.5px;height:3px;background:#10a38e"></div>
<div class="abs" style="left:910px;top:321px;width:311px;text-align:center;line-height:20px;font-size:15px;color:#9a9a9a;letter-spacing:-0.4px"><span class="k kc">파일 업로드</span></div>
<div class="abs" style="left:1322px;top:323px"><svg width="16" height="16" viewBox="0 0 16 16" fill="#10a38e"><path d="M10 0.5C10.4 3.8 11.6 5.2 15 5.8 11.6 6.4 10.4 7.8 10 11.1 9.6 7.8 8.4 6.4 5 5.8 8.4 5.2 9.6 3.8 10 0.5z"/><path d="M4.3 8.5C4.6 10.6 5.3 11.4 7.4 11.8 5.3 12.2 4.6 13 4.3 15.1 4 13 3.3 12.2 1.2 11.8 3.3 11.4 4 10.6 4.3 8.5z"/></svg></div>
<div class="abs" style="left:1346px;top:321px;line-height:20px;font-size:15px;font-weight:bold;color:#10a38e;letter-spacing:-0.4px"><span class="k">AI 이미지 생성</span></div>
<div class="lbl" style="left:910px;top:378px"><span class="k">프롬프트 입력</span></div>
<div class="abs" style="left:1453.5px;top:372px;width:79.5px;height:33px;border-radius:6px;background:linear-gradient(90deg,#10c3a9,#0aa8c7)"></div>
<div class="abs" style="left:1470px;top:380px"><svg width="16" height="16" viewBox="0 0 16 16" fill="#fff"><path d="M10 0.5C10.4 3.8 11.6 5.2 15 5.8 11.6 6.4 10.4 7.8 10 11.1 9.6 7.8 8.4 6.4 5 5.8 8.4 5.2 9.6 3.8 10 0.5z"/><path d="M4.3 8.5C4.6 10.6 5.3 11.4 7.4 11.8 5.3 12.2 4.6 13 4.3 15.1 4 13 3.3 12.2 1.2 11.8 3.3 11.4 4 10.6 4.3 8.5z"/></svg></div>
<div class="abs" style="left:1493px;top:372px;line-height:33px;font-size:13px;color:#fff;font-weight:bold;letter-spacing:-0.3px"><span class="k">생성</span></div>
<div class="inp" style="left:910px;top:415px;width:623px;height:73px;padding:14px 11px;line-height:16px;color:#333;letter-spacing:-0.3px"><span class="k" style="--s:0.925">3D스타일로, 이미지 중앙에는 태양계 행성들이 표시되어야 합니다.</span></div>
<div class="lbl" style="left:910px;top:506px"><span class="k">생성된 이미지</span></div>
<div class="lbl" style="left:1230px;top:506px"><span class="k">자세히보기</span></div>
<div class="thumb" style="left:911px;top:538.5px;width:144.5px;height:126.5px"><svg width="100%" height="100%" viewBox="0 0 302 265" preserveAspectRatio="none" style="display:block">
<defs>
<linearGradient id="t1bg" x1="0" y1="0" x2="0" y2="1"><stop offset="0" stop-color="#0a0f18"/><stop offset=".25" stop-color="#0f1724"/><stop offset=".5" stop-color="#1a2637"/><stop offset=".75" stop-color="#1c2a3c"/><stop offset="1" stop-color="#141e2c"/></linearGradient>
<radialGradient id="t1jup" cx=".5" cy=".45" r=".55"><stop offset="0" stop-color="#b08070"/><stop offset=".7" stop-color="#8a4c3a"/><stop offset="1" stop-color="#2a1814"/></radialGradient>
<radialGradient id="t1blu" cx=".45" cy=".4" r=".65"><stop offset="0" stop-color="#a6cade"/><stop offset=".7" stop-color="#6a9ab8"/><stop offset="1" stop-color="#24465e"/></radialGradient>
<radialGradient id="t1red" cx=".6" cy=".4" r=".7"><stop offset="0" stop-color="#f08a3a"/><stop offset=".55" stop-color="#c04a1c"/><stop offset="1" stop-color="#3e160c"/></radialGradient>
<radialGradient id="t1tan" cx=".45" cy=".4" r=".7"><stop offset="0" stop-color="#e6d2a8"/><stop offset=".6" stop-color="#b49a72"/><stop offset="1" stop-color="#3e3428"/></radialGradient>
<radialGradient id="t1earth" cx=".58" cy=".38" r=".6"><stop offset="0" stop-color="#3e659e"/><stop offset=".75" stop-color="#22427a"/><stop offset=".93" stop-color="#1a3664"/><stop offset="1" stop-color="#4a88d8"/></radialGradient>
<radialGradient id="t1esh" cx=".2" cy=".85" r=".7"><stop offset="0" stop-color="#050a14" stop-opacity=".75"/><stop offset="1" stop-color="#050a14" stop-opacity="0"/></radialGradient>
<radialGradient id="t1gold" cx=".5" cy=".5" r=".5"><stop offset="0" stop-color="#8a8272"/><stop offset=".6" stop-color="#7c705e"/><stop offset=".88" stop-color="#6a5640"/><stop offset=".955" stop-color="#8a5828"/><stop offset=".985" stop-color="#e89038"/><stop offset="1" stop-color="#ffd070"/></radialGradient>
<radialGradient id="t1flare" cx=".5" cy=".5" r=".5"><stop offset="0" stop-color="#fffbe8"/><stop offset=".12" stop-color="#ffdc8a"/><stop offset=".45" stop-color="#ff9a30" stop-opacity=".4"/><stop offset="1" stop-color="#ff8a20" stop-opacity="0"/></radialGradient>
<filter id="t1blur" x="-20%" y="-20%" width="140%" height="140%"><feGaussianBlur stdDeviation="3"/></filter>
<filter id="t1b1" x="-20%" y="-20%" width="140%" height="140%"><feGaussianBlur stdDeviation="1"/></filter>
<clipPath id="t1cj"><circle cx="45" cy="83" r="31"/></clipPath>
<clipPath id="t1ce"><circle cx="106.5" cy="243" r="93.6"/></clipPath>
<clipPath id="t1cg"><circle cx="324" cy="135" r="101"/></clipPath>
</defs>
<rect width="302" height="265" fill="url(#t1bg)"/>
<g fill="none" stroke="#6a84a0" stroke-width="1.4">
<ellipse cx="245" cy="215" rx="195" ry="55" stroke-opacity=".45"/>
<ellipse cx="190" cy="180" rx="270" ry="90" stroke-opacity=".18" stroke-width="5" filter="url(#t1b1)"/>
<ellipse cx="170" cy="105" rx="260" ry="32" stroke-opacity=".2" stroke-width="3" filter="url(#t1b1)"/>
<ellipse cx="170" cy="120" rx="260" ry="30" stroke-opacity=".15" stroke-width="2"/>
<ellipse cx="150" cy="255" rx="240" ry="45" stroke-opacity=".25"/>
<ellipse cx="120" cy="140" rx="200" ry="70" stroke-opacity=".15" stroke-width="6" filter="url(#t1b1)"/>
</g>
<path d="M150 195 Q220 160 300 170" stroke="#9ab4c8" stroke-opacity=".22" stroke-width="9" fill="none" filter="url(#t1blur)"/>
<circle cx="45" cy="83" r="31" fill="url(#t1jup)"/>
<g clip-path="url(#t1cj)">
<rect x="10" y="64" width="72" height="5" fill="#9a5a48" opacity=".6"/>
<rect x="10" y="70" width="72" height="8" fill="#a8cce0" opacity=".8"/>
<rect x="10" y="79" width="72" height="6" fill="#a84c34" opacity=".85"/>
<rect x="10" y="86" width="72" height="9" fill="#a8cce0" opacity=".7"/>
<rect x="10" y="97" width="72" height="3" fill="#b0d0e0" opacity=".4"/>
<circle cx="45" cy="83" r="31" fill="none" stroke="#120a0a" stroke-width="10" opacity=".45" filter="url(#t1b1)"/>
</g>
<circle cx="112.2" cy="73" r="13.4" fill="url(#t1blu)"/>
<circle cx="88" cy="73.9" r="3" fill="#4a8a5a"/>
<circle cx="158.7" cy="83.9" r="16.9" fill="url(#t1red)"/>
<circle cx="188.1" cy="77" r="3.8" fill="#7a98b8"/>
<circle cx="126" cy="106.6" r="13.8" fill="url(#t1tan)"/>
<circle cx="106.5" cy="243" r="93.6" fill="url(#t1earth)"/>
<g clip-path="url(#t1ce)">
<ellipse cx="165" cy="200" rx="24" ry="16" fill="#c9a477"/>
<ellipse cx="160" cy="193" rx="12" ry="7" fill="#d8bc90" opacity=".7"/>
<ellipse cx="172" cy="224" rx="15" ry="9" fill="#5a7a48" opacity=".9"/>
<ellipse cx="168" cy="222" rx="10" ry="5" fill="#e8eef4" opacity=".6"/>
<ellipse cx="184" cy="246" rx="8" ry="15" fill="#9a7050" opacity=".9"/>
<ellipse cx="140" cy="153" rx="14" ry="7" fill="#4a6a3a" opacity=".8"/>
<ellipse cx="70" cy="182" rx="28" ry="22" fill="#5a6a48" opacity=".55"/>
<ellipse cx="52" cy="190" rx="9" ry="20" fill="#8a6a50" opacity=".5"/>
<ellipse cx="102" cy="246" rx="22" ry="19" fill="#4e6a3a" opacity=".85"/>
<ellipse cx="118" cy="256" rx="13" ry="14" fill="#8a6040" opacity=".85"/>
<path d="M45 170 Q80 150 118 165 T165 160" stroke="#e8eef4" stroke-width="7" fill="none" opacity=".5" filter="url(#t1b1)"/>
<path d="M110 175 Q125 195 150 175" stroke="#e8eef4" stroke-width="5" fill="none" opacity=".45" filter="url(#t1b1)"/>
<ellipse cx="104" cy="158" rx="15" ry="6" fill="#f4f6f8" opacity=".75"/>
<path d="M70 215 Q90 225 75 240" stroke="#dfe6ee" stroke-width="5" fill="none" opacity=".35" filter="url(#t1b1)"/>
<path d="M20 230 Q50 200 90 215 T150 205" stroke="#dfe6ee" stroke-width="6" fill="none" opacity=".3" filter="url(#t1b1)"/>
<path d="M120 190 Q150 210 185 185" stroke="#e8eef4" stroke-width="4" fill="none" opacity=".35" filter="url(#t1b1)"/>
<ellipse cx="190" cy="225" rx="8" ry="10" fill="#eef2f6" opacity=".5" filter="url(#t1b1)"/>
<ellipse cx="75" cy="170" rx="18" ry="6" fill="#e8eef4" opacity=".45" filter="url(#t1b1)"/>
<rect x="0" y="140" width="302" height="140" fill="url(#t1esh)"/>
</g>
<circle cx="106.5" cy="243" r="93.6" fill="none" stroke="#5a9ae8" stroke-width="1.6" opacity=".75"/>
<circle cx="324" cy="135" r="103" fill="none" stroke="#ffa030" stroke-width="6" opacity=".6" filter="url(#t1blur)"/>
<path d="M232 90 A101 101 0 0 1 300 38" stroke="#ff9a30" stroke-width="14" fill="none" opacity=".35" filter="url(#t1blur)"/>
<circle cx="324" cy="135" r="101" fill="url(#t1gold)"/>
<g clip-path="url(#t1cg)" filter="url(#t1b1)">
<ellipse cx="298" cy="62" rx="24" ry="14" fill="#d4dee8" opacity=".7" filter="url(#t1b1)"/>
<ellipse cx="265" cy="150" rx="22" ry="9" fill="#e4e0d4" opacity=".55"/>
<ellipse cx="248" cy="112" rx="10" ry="22" fill="#c8bca8" opacity=".45"/>
<ellipse cx="282" cy="118" rx="16" ry="10" fill="#d8d2c4" opacity=".45"/>
<ellipse cx="300" cy="160" rx="14" ry="8" fill="#d0cabc" opacity=".4"/>
<ellipse cx="304" cy="110" rx="6" ry="5" fill="#14100c" opacity=".85"/>
<ellipse cx="302" cy="135" rx="7" ry="11" fill="#1e1812" opacity=".75"/>
<ellipse cx="255" cy="205" rx="35" ry="25" fill="#6a4020" opacity=".35"/>

</g>
<circle cx="222" cy="132" r="30" fill="url(#t1flare)"/>
<path d="M170 132 L222 132" stroke="#ffd080" stroke-width="1" opacity=".4" filter="url(#t1b1)"/>
</svg></div>
<div class="ck" style="left:920.2px;top:545.3px"></div>
<div class="dk" style="left:1028.5px;top:545.8px;display:flex;align-items:center;justify-content:center"><svg width="4" height="12" viewBox="0 0 4 12" fill="#fff"><circle cx="2" cy="2" r="1.2"/><circle cx="2" cy="6" r="1.2"/><circle cx="2" cy="10" r="1.2"/></svg></div>
<div class="dk" style="left:1002.5px;top:638.0px;display:flex;align-items:center;justify-content:center"><svg width="11" height="10" viewBox="0 0 11 10" fill="none" stroke="#fff" stroke-width="1.1" stroke-linejoin="round"><path d="M6.5 1v2C3 3.3 1.2 5.5 1 9c1.2-2 3-2.8 5.5-2.8V8.5L10.3 4.8z"/></svg></div>
<div class="dk" style="left:1028.5px;top:638.0px;display:flex;align-items:center;justify-content:center"><svg width="10" height="10" viewBox="0 0 10 10" fill="none" stroke="#fff" stroke-width="1.3" stroke-linecap="round" stroke-linejoin="round"><path d="M5 1v5.2M2.8 4.2L5 6.4l2.2-2.2M1.5 9h7"/></svg></div>
<div class="thumb" style="left:1068px;top:538.5px;width:144.5px;height:126.5px"><svg width="100%" height="100%" viewBox="0 0 145 127" preserveAspectRatio="none" style="display:block">
<defs>
<linearGradient id="t2bg" x1="0" y1="0" x2="0" y2="1"><stop offset="0" stop-color="#162230"/><stop offset=".3" stop-color="#0e151f"/><stop offset=".62" stop-color="#0d1219"/><stop offset=".7" stop-color="#2a3440"/><stop offset="1" stop-color="#2a2a30"/></linearGradient>
<radialGradient id="t2big" cx=".3" cy=".4" r=".7"><stop offset="0" stop-color="#7a6656"/><stop offset=".5" stop-color="#54504c"/><stop offset="1" stop-color="#1e2a36"/></radialGradient>
<radialGradient id="t2mars" cx=".45" cy=".4" r=".65"><stop offset="0" stop-color="#c08a6a"/><stop offset=".6" stop-color="#95603f"/><stop offset="1" stop-color="#3a2420"/></radialGradient>
<radialGradient id="t2e" cx=".45" cy=".4" r=".6"><stop offset="0" stop-color="#8ab0d8"/><stop offset=".7" stop-color="#3466b0"/><stop offset="1" stop-color="#1a3a70"/></radialGradient>
</defs>
<rect width="145" height="127" fill="url(#t2bg)"/>
<ellipse cx="70" cy="15" rx="50" ry="10" fill="#2a3a4a" opacity=".4"/>
<g opacity=".85">
<ellipse cx="60" cy="100" rx="90" ry="8" fill="#5a4438" opacity=".7"/>
<ellipse cx="30" cy="90" rx="40" ry="5" fill="#8a9aa8" opacity=".5"/>
<ellipse cx="80" cy="118" rx="90" ry="7" fill="#6a4a3a" opacity=".6"/>
<ellipse cx="40" cy="85" rx="60" ry="2.5" fill="#4a6a80" opacity=".6"/>
</g>
<circle cx="150" cy="62" r="56" fill="url(#t2big)"/>
<ellipse cx="128" cy="58" rx="9" ry="4" fill="#4aa8c0" opacity=".6"/><ellipse cx="110" cy="40" rx="10" ry="16" fill="#9a8068" opacity=".4"/><ellipse cx="100" cy="75" rx="5" ry="14" fill="#8a9aa8" opacity=".3"/>
<ellipse cx="120" cy="85" rx="14" ry="10" fill="#3a5a70" opacity=".6"/>
<circle cx="21" cy="31" r="10" fill="#7a8a98"/>
<circle cx="48" cy="30.5" r="9" fill="#9aa8b4"/>
<circle cx="61" cy="30.5" r="3" fill="#c0b090"/>
<circle cx="72.5" cy="31" r="6" fill="#b0562e"/>
<circle cx="83" cy="31" r="5" fill="#9a9a9a"/>
<circle cx="91" cy="31" r="3" fill="#8a98b0"/>
<circle cx="98" cy="31" r="3" fill="#6a90b0"/>
<rect x="0" y="30" width="12" height="2" fill="#c08060" opacity=".6"/>
<circle cx="72.5" cy="63.3" r="9.3" fill="url(#t2e)"/>
<circle cx="44.8" cy="101.7" r="20.6" fill="url(#t2mars)"/>
<rect x="28" y="103" width="34" height="2" fill="#6a3a2a" opacity=".6"/>
</svg></div>
<div class="ck" style="left:1077.2px;top:545.3px"></div>
<div class="dk" style="left:1185.5px;top:545.8px;display:flex;align-items:center;justify-content:center"><svg width="4" height="12" viewBox="0 0 4 12" fill="#fff"><circle cx="2" cy="2" r="1.2"/><circle cx="2" cy="6" r="1.2"/><circle cx="2" cy="10" r="1.2"/></svg></div>
<div class="dk" style="left:1159.5px;top:638.0px;display:flex;align-items:center;justify-content:center"><svg width="11" height="10" viewBox="0 0 11 10" fill="none" stroke="#fff" stroke-width="1.1" stroke-linejoin="round"><path d="M6.5 1v2C3 3.3 1.2 5.5 1 9c1.2-2 3-2.8 5.5-2.8V8.5L10.3 4.8z"/></svg></div>
<div class="dk" style="left:1185.5px;top:638.0px;display:flex;align-items:center;justify-content:center"><svg width="10" height="10" viewBox="0 0 10 10" fill="none" stroke="#fff" stroke-width="1.3" stroke-linecap="round" stroke-linejoin="round"><path d="M5 1v5.2M2.8 4.2L5 6.4l2.2-2.2M1.5 9h7"/></svg></div>
<div class="thumb" style="left:911px;top:677px;width:144.5px;height:125.5px"><svg width="100%" height="100%" viewBox="0 0 145 126" preserveAspectRatio="none" style="display:block">
<defs>
<linearGradient id="t3bg" x1="0" y1="0" x2="1" y2="1"><stop offset="0" stop-color="#3a2420"/><stop offset=".5" stop-color="#1e1a26"/><stop offset="1" stop-color="#101a30"/></linearGradient>
<radialGradient id="t3hor" gradientUnits="userSpaceOnUse" cx="200" cy="280" r="258"><stop offset="0" stop-color="#0c1a38"/><stop offset=".85" stop-color="#1e3a72"/><stop offset=".955" stop-color="#7a96c0"/><stop offset="1" stop-color="#e8eef8"/></radialGradient>
<radialGradient id="t3red" cx=".5" cy=".5" r=".5"><stop offset="0" stop-color="#3a2020"/><stop offset=".6" stop-color="#5a3026"/><stop offset=".9" stop-color="#6e3a2a"/><stop offset=".97" stop-color="#a85a34"/><stop offset="1" stop-color="#ffc080"/></radialGradient>
<radialGradient id="t3e" cx=".45" cy=".4" r=".6"><stop offset="0" stop-color="#3a6aa8"/><stop offset=".8" stop-color="#16346a"/><stop offset="1" stop-color="#2a6ad0"/></radialGradient>
<filter id="t3blur"><feGaussianBlur stdDeviation="1.5"/></filter>
<clipPath id="t3ce"><circle cx="75.4" cy="86.8" r="30.6"/></clipPath>
</defs>
<rect width="145" height="126" fill="url(#t3bg)"/>
<circle cx="200" cy="280" r="258" fill="url(#t3hor)"/>
<circle cx="4" cy="52" r="48" fill="none" stroke="#ff9a50" stroke-width="2.5" opacity=".5" filter="url(#t3blur)"/>
<circle cx="4" cy="52" r="46" fill="url(#t3red)"/>
<circle cx="78" cy="27" r="20.6" fill="#1c2234" stroke="#e8904a" stroke-width="1.3"/><path d="M62 40 Q85 30 108 8" stroke="#8a90a8" stroke-width="1.5" fill="none" opacity=".4"/>
<circle cx="86" cy="7" r="4" fill="#fff" opacity=".8" filter="url(#t3blur)"/>
<circle cx="75.4" cy="86.8" r="32" fill="none" stroke="#4aa0ff" stroke-width="2.5" opacity=".6" filter="url(#t3blur)"/>
<circle cx="75.4" cy="86.8" r="30.6" fill="url(#t3e)"/>
<g clip-path="url(#t3ce)">
<ellipse cx="70" cy="72" rx="13" ry="9" fill="#c8a468" opacity=".9"/>
<ellipse cx="64" cy="80" rx="6" ry="5" fill="#6a8a48" opacity=".8"/>
<ellipse cx="84" cy="97" rx="9" ry="11" fill="#6a7a44" opacity=".85"/>
<ellipse cx="86" cy="104" rx="5" ry="5" fill="#a08050" opacity=".7"/>
<path d="M48 78 Q55 70 62 84 M50 90 Q58 88 60 98" stroke="#eef2f6" stroke-width="2.5" fill="none" opacity=".55"/>
<ellipse cx="80" cy="63" rx="6" ry="3" fill="#eef2f6" opacity=".6"/>
</g>
<circle cx="132" cy="100" r="9" fill="#5a4438"/>
</svg></div>
<div class="ck" style="left:920.2px;top:683.8px"></div>
<div class="dk" style="left:1028.5px;top:684.3px;display:flex;align-items:center;justify-content:center"><svg width="4" height="12" viewBox="0 0 4 12" fill="#fff"><circle cx="2" cy="2" r="1.2"/><circle cx="2" cy="6" r="1.2"/><circle cx="2" cy="10" r="1.2"/></svg></div>
<div class="dk" style="left:1002.5px;top:776.5px;display:flex;align-items:center;justify-content:center"><svg width="11" height="10" viewBox="0 0 11 10" fill="none" stroke="#fff" stroke-width="1.1" stroke-linejoin="round"><path d="M6.5 1v2C3 3.3 1.2 5.5 1 9c1.2-2 3-2.8 5.5-2.8V8.5L10.3 4.8z"/></svg></div>
<div class="dk" style="left:1028.5px;top:776.5px;display:flex;align-items:center;justify-content:center"><svg width="10" height="10" viewBox="0 0 10 10" fill="none" stroke="#fff" stroke-width="1.3" stroke-linecap="round" stroke-linejoin="round"><path d="M5 1v5.2M2.8 4.2L5 6.4l2.2-2.2M1.5 9h7"/></svg></div>
<div class="thumb" style="left:1068px;top:677px;width:144.5px;height:125.5px"><svg width="100%" height="100%" viewBox="0 0 145 126" preserveAspectRatio="none" style="display:block">
<defs>
<linearGradient id="t4bg" x1="0" y1="0" x2="1" y2="1"><stop offset="0" stop-color="#2a1a16"/><stop offset=".45" stop-color="#1e1a24"/><stop offset="1" stop-color="#12182a"/></linearGradient>
<radialGradient id="t4hor" gradientUnits="userSpaceOnUse" cx="230" cy="290" r="268"><stop offset="0" stop-color="#0e1c40"/><stop offset=".8" stop-color="#2a4c8a"/><stop offset=".95" stop-color="#7c9cc8"/><stop offset="1" stop-color="#dce8f6"/></radialGradient>
<radialGradient id="t4dk" cx=".5" cy=".5" r=".5"><stop offset="0" stop-color="#1a0c08"/><stop offset=".8" stop-color="#2e160c"/><stop offset=".93" stop-color="#5a2a14"/><stop offset=".98" stop-color="#c07030"/><stop offset="1" stop-color="#ffc070"/></radialGradient>
<radialGradient id="t4fl" cx=".5" cy=".5" r=".5"><stop offset="0" stop-color="#fffbe8"/><stop offset=".25" stop-color="#ffcf80"/><stop offset="1" stop-color="#ff9030" stop-opacity="0"/></radialGradient>
<radialGradient id="t4e" cx=".4" cy=".4" r=".65"><stop offset="0" stop-color="#5aa8c0"/><stop offset=".7" stop-color="#2a6a8a"/><stop offset="1" stop-color="#0e2a40"/></radialGradient>
<filter id="t4blur"><feGaussianBlur stdDeviation="1.5"/></filter>
</defs>
<rect width="145" height="126" fill="url(#t4bg)"/>
<circle cx="230" cy="290" r="268" fill="url(#t4hor)"/>
<circle cx="0" cy="56" r="51" fill="none" stroke="#ff9a40" stroke-width="3" opacity=".6" filter="url(#t4blur)"/>
<circle cx="0" cy="56" r="50" fill="url(#t4dk)"/>
<circle cx="47" cy="35.6" r="14" fill="url(#t4fl)"/>
<circle cx="101" cy="12.8" r="11.4" fill="#c8885a"/>
<rect x="90" y="9" width="22" height="2.5" fill="#f0e8e0" opacity=".8"/>
<rect x="90" y="15" width="22" height="2" fill="#e0a070" opacity=".8"/>
<circle cx="86.8" cy="91" r="25" fill="url(#t4e)"/>
<ellipse cx="78" cy="85" rx="8" ry="10" fill="#a0a050" opacity=".35"/>
<circle cx="118" cy="65.4" r="12" fill="#5070b0" opacity=".85"/>
<circle cx="139" cy="71" r="11" fill="#b88a62"/>
<circle cx="82.5" cy="49.8" r="7" fill="#8a7462"/>
<circle cx="12.8" cy="115" r="11" fill="#7a7878"/>
<circle cx="25" cy="101" r="6" fill="#0c1018"/>
<circle cx="79.7" cy="36.3" r="3.5" fill="#d07030"/>
<circle cx="56" cy="97" r="3.5" fill="#c06a40"/>
<circle cx="52" cy="77" r="3" fill="#8090c0"/>
</svg></div>
<div class="ck" style="left:1077.2px;top:683.8px"></div>
<div class="dk" style="left:1185.5px;top:684.3px;display:flex;align-items:center;justify-content:center"><svg width="4" height="12" viewBox="0 0 4 12" fill="#fff"><circle cx="2" cy="2" r="1.2"/><circle cx="2" cy="6" r="1.2"/><circle cx="2" cy="10" r="1.2"/></svg></div>
<div class="dk" style="left:1159.5px;top:776.5px;display:flex;align-items:center;justify-content:center"><svg width="11" height="10" viewBox="0 0 11 10" fill="none" stroke="#fff" stroke-width="1.1" stroke-linejoin="round"><path d="M6.5 1v2C3 3.3 1.2 5.5 1 9c1.2-2 3-2.8 5.5-2.8V8.5L10.3 4.8z"/></svg></div>
<div class="dk" style="left:1185.5px;top:776.5px;display:flex;align-items:center;justify-content:center"><svg width="10" height="10" viewBox="0 0 10 10" fill="none" stroke="#fff" stroke-width="1.3" stroke-linecap="round" stroke-linejoin="round"><path d="M5 1v5.2M2.8 4.2L5 6.4l2.2-2.2M1.5 9h7"/></svg></div>
<div class="thumb" style="left:1231px;top:538px;width:302px;height:265px"><svg width="100%" height="100%" viewBox="0 0 302 265" preserveAspectRatio="none" style="display:block">
<defs>
<linearGradient id="pvbg" x1="0" y1="0" x2="0" y2="1"><stop offset="0" stop-color="#0a0f18"/><stop offset=".25" stop-color="#0f1724"/><stop offset=".5" stop-color="#1a2637"/><stop offset=".75" stop-color="#1c2a3c"/><stop offset="1" stop-color="#141e2c"/></linearGradient>
<radialGradient id="pvjup" cx=".5" cy=".45" r=".55"><stop offset="0" stop-color="#b08070"/><stop offset=".7" stop-color="#8a4c3a"/><stop offset="1" stop-color="#2a1814"/></radialGradient>
<radialGradient id="pvblu" cx=".45" cy=".4" r=".65"><stop offset="0" stop-color="#a6cade"/><stop offset=".7" stop-color="#6a9ab8"/><stop offset="1" stop-color="#24465e"/></radialGradient>
<radialGradient id="pvred" cx=".6" cy=".4" r=".7"><stop offset="0" stop-color="#f08a3a"/><stop offset=".55" stop-color="#c04a1c"/><stop offset="1" stop-color="#3e160c"/></radialGradient>
<radialGradient id="pvtan" cx=".45" cy=".4" r=".7"><stop offset="0" stop-color="#e6d2a8"/><stop offset=".6" stop-color="#b49a72"/><stop offset="1" stop-color="#3e3428"/></radialGradient>
<radialGradient id="pvearth" cx=".58" cy=".38" r=".6"><stop offset="0" stop-color="#3e659e"/><stop offset=".75" stop-color="#22427a"/><stop offset=".93" stop-color="#1a3664"/><stop offset="1" stop-color="#4a88d8"/></radialGradient>
<radialGradient id="pvesh" cx=".2" cy=".85" r=".7"><stop offset="0" stop-color="#050a14" stop-opacity=".75"/><stop offset="1" stop-color="#050a14" stop-opacity="0"/></radialGradient>
<radialGradient id="pvgold" cx=".5" cy=".5" r=".5"><stop offset="0" stop-color="#8a8272"/><stop offset=".6" stop-color="#7c705e"/><stop offset=".88" stop-color="#6a5640"/><stop offset=".955" stop-color="#8a5828"/><stop offset=".985" stop-color="#e89038"/><stop offset="1" stop-color="#ffd070"/></radialGradient>
<radialGradient id="pvflare" cx=".5" cy=".5" r=".5"><stop offset="0" stop-color="#fffbe8"/><stop offset=".12" stop-color="#ffdc8a"/><stop offset=".45" stop-color="#ff9a30" stop-opacity=".4"/><stop offset="1" stop-color="#ff8a20" stop-opacity="0"/></radialGradient>
<filter id="pvblur" x="-20%" y="-20%" width="140%" height="140%"><feGaussianBlur stdDeviation="3"/></filter>
<filter id="pvb1" x="-20%" y="-20%" width="140%" height="140%"><feGaussianBlur stdDeviation="1"/></filter>
<clipPath id="pvcj"><circle cx="45" cy="83" r="31"/></clipPath>
<clipPath id="pvce"><circle cx="106.5" cy="243" r="93.6"/></clipPath>
<clipPath id="pvcg"><circle cx="324" cy="135" r="101"/></clipPath>
</defs>
<rect width="302" height="265" fill="url(#pvbg)"/>
<g fill="none" stroke="#6a84a0" stroke-width="1.4">
<ellipse cx="245" cy="215" rx="195" ry="55" stroke-opacity=".45"/>
<ellipse cx="190" cy="180" rx="270" ry="90" stroke-opacity=".18" stroke-width="5" filter="url(#pvb1)"/>
<ellipse cx="170" cy="105" rx="260" ry="32" stroke-opacity=".2" stroke-width="3" filter="url(#pvb1)"/>
<ellipse cx="170" cy="120" rx="260" ry="30" stroke-opacity=".15" stroke-width="2"/>
<ellipse cx="150" cy="255" rx="240" ry="45" stroke-opacity=".25"/>
<ellipse cx="120" cy="140" rx="200" ry="70" stroke-opacity=".15" stroke-width="6" filter="url(#pvb1)"/>
</g>
<path d="M150 195 Q220 160 300 170" stroke="#9ab4c8" stroke-opacity=".22" stroke-width="9" fill="none" filter="url(#pvblur)"/>
<circle cx="45" cy="83" r="31" fill="url(#pvjup)"/>
<g clip-path="url(#pvcj)">
<rect x="10" y="64" width="72" height="5" fill="#9a5a48" opacity=".6"/>
<rect x="10" y="70" width="72" height="8" fill="#a8cce0" opacity=".8"/>
<rect x="10" y="79" width="72" height="6" fill="#a84c34" opacity=".85"/>
<rect x="10" y="86" width="72" height="9" fill="#a8cce0" opacity=".7"/>
<rect x="10" y="97" width="72" height="3" fill="#b0d0e0" opacity=".4"/>
<circle cx="45" cy="83" r="31" fill="none" stroke="#120a0a" stroke-width="10" opacity=".45" filter="url(#pvb1)"/>
</g>
<circle cx="112.2" cy="73" r="13.4" fill="url(#pvblu)"/>
<circle cx="88" cy="73.9" r="3" fill="#4a8a5a"/>
<circle cx="158.7" cy="83.9" r="16.9" fill="url(#pvred)"/>
<circle cx="188.1" cy="77" r="3.8" fill="#7a98b8"/>
<circle cx="126" cy="106.6" r="13.8" fill="url(#pvtan)"/>
<circle cx="106.5" cy="243" r="93.6" fill="url(#pvearth)"/>
<g clip-path="url(#pvce)">
<ellipse cx="165" cy="200" rx="24" ry="16" fill="#c9a477"/>
<ellipse cx="160" cy="193" rx="12" ry="7" fill="#d8bc90" opacity=".7"/>
<ellipse cx="172" cy="224" rx="15" ry="9" fill="#5a7a48" opacity=".9"/>
<ellipse cx="168" cy="222" rx="10" ry="5" fill="#e8eef4" opacity=".6"/>
<ellipse cx="184" cy="246" rx="8" ry="15" fill="#9a7050" opacity=".9"/>
<ellipse cx="140" cy="153" rx="14" ry="7" fill="#4a6a3a" opacity=".8"/>
<ellipse cx="70" cy="182" rx="28" ry="22" fill="#5a6a48" opacity=".55"/>
<ellipse cx="52" cy="190" rx="9" ry="20" fill="#8a6a50" opacity=".5"/>
<ellipse cx="102" cy="246" rx="22" ry="19" fill="#4e6a3a" opacity=".85"/>
<ellipse cx="118" cy="256" rx="13" ry="14" fill="#8a6040" opacity=".85"/>
<path d="M45 170 Q80 150 118 165 T165 160" stroke="#e8eef4" stroke-width="7" fill="none" opacity=".5" filter="url(#pvb1)"/>
<path d="M110 175 Q125 195 150 175" stroke="#e8eef4" stroke-width="5" fill="none" opacity=".45" filter="url(#pvb1)"/>
<ellipse cx="104" cy="158" rx="15" ry="6" fill="#f4f6f8" opacity=".75"/>
<path d="M70 215 Q90 225 75 240" stroke="#dfe6ee" stroke-width="5" fill="none" opacity=".35" filter="url(#pvb1)"/>
<path d="M20 230 Q50 200 90 215 T150 205" stroke="#dfe6ee" stroke-width="6" fill="none" opacity=".3" filter="url(#pvb1)"/>
<path d="M120 190 Q150 210 185 185" stroke="#e8eef4" stroke-width="4" fill="none" opacity=".35" filter="url(#pvb1)"/>
<ellipse cx="190" cy="225" rx="8" ry="10" fill="#eef2f6" opacity=".5" filter="url(#pvb1)"/>
<ellipse cx="75" cy="170" rx="18" ry="6" fill="#e8eef4" opacity=".45" filter="url(#pvb1)"/>
<rect x="0" y="140" width="302" height="140" fill="url(#pvesh)"/>
</g>
<circle cx="106.5" cy="243" r="93.6" fill="none" stroke="#5a9ae8" stroke-width="1.6" opacity=".75"/>
<circle cx="324" cy="135" r="103" fill="none" stroke="#ffa030" stroke-width="6" opacity=".6" filter="url(#pvblur)"/>
<path d="M232 90 A101 101 0 0 1 300 38" stroke="#ff9a30" stroke-width="14" fill="none" opacity=".35" filter="url(#pvblur)"/>
<circle cx="324" cy="135" r="101" fill="url(#pvgold)"/>
<g clip-path="url(#pvcg)" filter="url(#pvb1)">
<ellipse cx="298" cy="62" rx="24" ry="14" fill="#d4dee8" opacity=".7" filter="url(#pvb1)"/>
<ellipse cx="265" cy="150" rx="22" ry="9" fill="#e4e0d4" opacity=".55"/>
<ellipse cx="248" cy="112" rx="10" ry="22" fill="#c8bca8" opacity=".45"/>
<ellipse cx="282" cy="118" rx="16" ry="10" fill="#d8d2c4" opacity=".45"/>
<ellipse cx="300" cy="160" rx="14" ry="8" fill="#d0cabc" opacity=".4"/>
<ellipse cx="304" cy="110" rx="6" ry="5" fill="#14100c" opacity=".85"/>
<ellipse cx="302" cy="135" rx="7" ry="11" fill="#1e1812" opacity=".75"/>
<ellipse cx="255" cy="205" rx="35" ry="25" fill="#6a4020" opacity=".35"/>

</g>
<circle cx="222" cy="132" r="30" fill="url(#pvflare)"/>
<path d="M170 132 L222 132" stroke="#ffd080" stroke-width="1" opacity=".4" filter="url(#pvb1)"/>
</svg></div>
<div class="abs" style="left:1411px;top:829px;width:56px;height:33.5px;border-radius:6px;border:1px solid #1fa7c4;background:#fff;color:#1a9fbe;font-size:13px;line-height:31px;text-align:center;-webkit-text-stroke:.3px #1a9fbe"><span class="k kc">삭제</span></div>
<div class="abs" style="left:1477px;top:829px;width:56px;height:33.5px;border-radius:6px;background:#1aa8c5;color:#fff;font-size:13px;line-height:33px;text-align:center;-webkit-text-stroke:.4px #fff"><span class="k kc">수정</span></div>
</body>
</html>
